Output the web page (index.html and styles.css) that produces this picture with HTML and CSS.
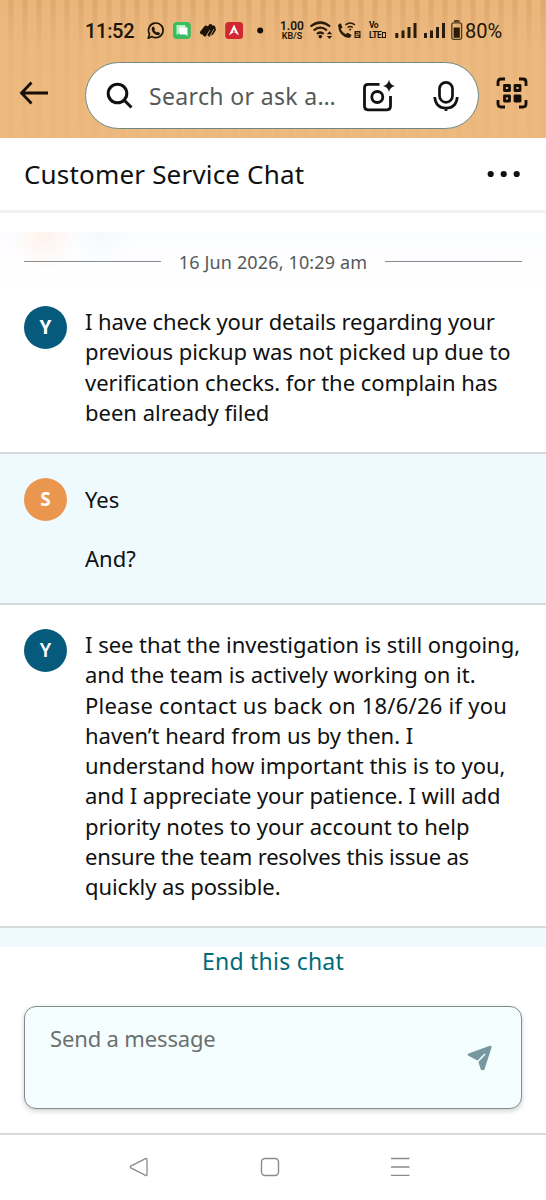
FILE: index.html
```html
<!DOCTYPE html>
<html lang="en">
<head>
<meta charset="utf-8">
<title>Customer Service Chat</title>
<link rel="stylesheet" href="styles.css">
</head>
<body>
<header class="top">
  <div class="status">
    <span class="clock">11:52</span>
    <svg class="status-icons" width="120" height="24" viewBox="145 19 120 24">
      <path d="M148.200 38.200l1.300-4.200a7.300 7.300 0 1 1 2.600 2.600z" fill="none" stroke="#1b1208" stroke-width="1.600" stroke-linejoin="round"/>
      <path d="M152.200 27.200l1.400-.7 1.400 2.500-.8 1.100q.8 1.800 2.600 2.500l1-.8 2.300 1.400q-.5 2.200-2.600 2-4.600-1-5.800-5.800-.1-1.300.5-2.200z" fill="#1b1208"/>
      <rect x="173" y="22" width="17.800" height="17" rx="4" fill="#3abd62"/>
      <path d="M176.500 25h9v8h-6l-3 2z" fill="#b9f3c7"/><path d="M179.500 27.500h8v8.500l-2-1.500h-6z" fill="#fff"/>
      <g stroke="#1b1208" stroke-width="4" stroke-linecap="round" fill="none"><path d="M202 32.500l4-5M205 34.500l5.500-8.500M209.500 34.500l4-7"/><path d="M212 33.500l2.500-4" stroke-width="3"/></g>
      <path d="M206.500 35.500l3.500-5.500M210 36l4-7" stroke="#edba7f" stroke-width=".8"/>
      <rect x="225.200" y="22" width="17.800" height="17" rx="3.500" fill="#d22731"/>
      <path d="M234 24.500l5.200 11-5.200-3.500-5.200 3.500z" fill="#fff"/><path d="M234 29.500l1.500 3-1.500-1-1.500 1z" fill="#d22731"/>
      <circle cx="260.200" cy="30.500" r="3" fill="#160d05"/>
    </svg>
    <span class="speed"><b>1.00</b><b class="unit">KB/S</b></span>
    <svg class="wifi" width="52" height="24" viewBox="309 19 52 24" fill="none" stroke="#2b1b0a">
      <path d="M310.500 26.500q9.800-8 19.600 0M313.700 30.300q6.600-5.200 13.200 0M316.900 33.800q3.400-2.600 6.800 0" stroke-width="2.200"/>
      <circle cx="320.300" cy="36.600" r="1.800" fill="#2b1b0a" stroke="none"/>
      <path d="M326.800 34.200l2.700-3 2.700 3zM326.800 36l2.700 3 2.700-3z" fill="#2b1b0a" stroke="none"/>
      <path d="M338 25.500q.8-2.300 3-2l1.500 4-1.800 1.500q1.500 3.400 5 5.200l1.700-1.500 4 2q0 2.700-2.500 3.200-9.700-1-10.900-12.400z" fill="#2b1b0a" stroke="none"/>
      <path d="M345.500 24.800q4.700-3.800 9.400 0M347.600 27.500q2.600-2 5.200 0" stroke-width="1.500"/><circle cx="350.200" cy="29.500" r="1" fill="#2b1b0a" stroke="none"/>
      <rect x="354.500" y="31" width="6" height="7" fill="#2b1b0a" stroke="none"/><path d="M356 32.800h3v1.800h-3v1.800h3" stroke="#edba7f" stroke-width=".8"/>
    </svg>
    <span class="volte"><b>Vo</b><b>LTE<i></i></b></span>
    <svg class="bars" width="70" height="24" viewBox="394 19 70 24" fill="#2b1b0a">
      <path d="M395.300 33h3v5h-3zM401.500 30.500h3v7.500h-3zM407.500 27h3v11h-3zM413.500 23h3v15h-3zM424 33h3v5h-3zM430 30.500h3v7.500h-3zM436 27h3v11h-3zM442 23h3v15h-3z"/>
      <rect x="451.800" y="22.800" width="9.800" height="16.500" rx="2" fill="none" stroke="#4a3f22" stroke-width="1.300"/><path d="M453.600 27.500h6.200v10.200h-6.200zM454 20.300h5.500v1.500H454z"/>
    </svg>
    <span class="percent">80%</span>
  </div>
  <div class="search-row">
    <svg class="back" width="30" height="26" viewBox="0 0 30 26" fill="none" stroke="#160f08" stroke-width="2.800"><path d="M2 13H29M12.500 2.500L2.500 13l10 10.500"/></svg>
    <div class="search">
      <svg class="glass" width="28" height="28" viewBox="0 0 28 28" fill="none" stroke="#111" stroke-width="3"><circle cx="11.500" cy="11.500" r="9.300"/><path d="M18 18l7.500 7.500"/></svg>
      <span class="placeholder">Search or ask a…</span>
      <svg class="lens" width="34" height="34" viewBox="362 78 34 34" fill="none" stroke="#111" stroke-width="2.800"><path d="M380.500 83.300h-11.500q-3.500 0-3.500 3.500v18.500q0 3.500 3.500 3.500h19q3.500 0 3.500-3.500V95"/><circle cx="378.300" cy="96" r="5.500"/><path d="M390 78.700q1 5.200 6 6.200-5 1-6 6.200-1-5.200-6-6.200 5-1 6-6.200z" fill="#111" stroke="none"/></svg>
      <svg class="mic" width="28" height="32" viewBox="432 80 28 32" fill="none" stroke="#111" stroke-width="2.700"><rect x="439.500" y="82.300" width="13" height="20" rx="6.500"/><path d="M434.700 97q1 11.200 11.300 11.200T457.300 97M446 108v3"/></svg>
    </div>
    <svg class="scan" width="32" height="32" viewBox="0 0 32 32" fill="none" stroke="#160f08" stroke-width="2.800"><path d="M2 9V5q0-3 3-3h4M23 2h4q3 0 3 3v4M30 23v4q0 3-3 3h-4M9 30H5q-3 0-3-3v-4"/><path d="M8.500 8.500h5v5h-5zM19 8.500h5v5h-5zM8.500 19h5v5h-5z" stroke-linejoin="round"/><path d="M19 19h5v5h-5z" fill="#160f08" stroke-linejoin="round"/></svg>
  </div>
</header>
<div class="title">
  <h1>Customer Service Chat</h1>
  <svg width="34" height="8" viewBox="0 0 34 8" fill="#0d1113"><circle cx="3.700" cy="4" r="3.100"/><circle cx="16.700" cy="4" r="3.100"/><circle cx="29.700" cy="4" r="3.100"/></svg>
</div>
<main class="chat">
  <div class="date"><span>16 Jun 2026, 10:29 am</span></div>
  <section class="msg first">
    <div class="avatar">Y</div>
    <div class="text"><p><span class="l1">I have check your details regarding your</span><span class="l2">previous pickup was not picked up due to</span><span class="l3">verification checks. for the complain has</span><span class="l4">been already filed</span></p></div>
  </section>
  <section class="msg mine">
    <div class="avatar orange">S</div>
    <div class="text"><p><span class="l5">Yes</span></p><p><span class="l6">And?</span></p></div>
  </section>
  <section class="msg last">
    <div class="avatar">Y</div>
    <div class="text"><p><span class="l7">I see that the investigation is still ongoing,</span><span class="l8">and the team is actively working on it.</span><span class="l9">Please contact us back on 18/6/26 if you</span><span class="l10">haven’t heard from us by then. I</span><span class="l11">understand how important this is to you,</span><span class="l12">and I appreciate your patience. I will add</span><span class="l13">priority notes to your account to help</span><span class="l14">ensure the team resolves this issue as</span><span class="l15">quickly as possible.</span></p></div>
  </section>
  <div class="peek"></div>
</main>
<footer class="composer">
  <a class="end">End this chat</a>
  <div class="input">
    <span>Send a message</span>
    <svg width="26" height="26" viewBox="0 0 26 26"><path d="M2 9.700L23.300 2 16.300 23.800H15L12.300 15.500 14 12.500 10.500 14z" fill="#7798a1" stroke="#7798a1" stroke-width="2.600" stroke-linejoin="round"/><path d="M10.300 17l7.700-8" stroke="#f5feff" stroke-width="1.600"/></svg>
  </div>
</footer>
<nav class="system">
  <svg width="20" height="20" viewBox="0 0 20 20" fill="none" stroke="#8b8b8b" stroke-width="1.300"><path d="M2.300 8.800L16.500 1.600q1.500-.6 1.500 1v14.800q0 1.600-1.500 1L2.300 11.200q-2-1.200 0-2.400z"/></svg>
  <svg width="20" height="20" viewBox="0 0 20 20" fill="none" stroke="#8b8b8b" stroke-width="1.400"><rect x="1.500" y="1.500" width="17" height="17" rx="3.500"/></svg>
  <svg width="20" height="20" viewBox="0 0 20 20" fill="none" stroke="#8b8b8b" stroke-width="1.400"><path d="M1 1.500h18.500M1 10h18.500M1 18.400h18.500"/></svg>
</nav>
</body>
</html>
```
FILE: styles.css
```css
* { box-sizing: border-box; }
body { margin: 0; width: 546px; height: 1200px; overflow: hidden; background: #fff; color: #0f1111; font-family: "Noto Sans", sans-serif; display: flex; flex-direction: column; }
svg { display: block; flex: none; }
.top { height: 138px; flex: none; background: linear-gradient(to bottom, rgba(237,186,128,.15) 0, rgba(237,186,128,.75) 50px, rgba(237,186,128,.85) 138px), repeating-linear-gradient(90deg, #e9b57a 0 8px, #dda66b 9px 13px, #e9b57a 14px); }
.status { height: 62px; padding: 19px 0 0 85px; display: flex; align-items: flex-start; color: #21150a; }
.clock { width: 60px; font: 500 20px/24px Roboto, sans-serif; letter-spacing: -.3px; white-space: nowrap; }
.speed { width: 30px; margin-left: 12px; padding-top: 1px; display: flex; flex-direction: column; align-items: center; font: 12px/12px Roboto, sans-serif; }
.speed b { font-weight: 600; }
.speed .unit { font-size: 9px; line-height: 9px; }
.wifi { margin-left: 2px; }
.volte { width: 20px; margin: 1px 0 0 8px; font: 8.500px/10px Roboto, sans-serif; display: flex; flex-direction: column; letter-spacing: -.5px; }
.volte b { white-space: nowrap; }
.volte i { display: inline-block; width: 4px; height: 6px; border: 1.500px solid #21150a; margin-left: 1px; }
.bars { margin-left: 5px; }
.percent { font: 20px/24px Roboto, sans-serif; margin-left: 1px; }
.search-row { display: flex; padding-left: 19px; }
.back { margin: 18px 0 0; }
.search { margin-left: 36px; width: 394px; height: 67px; border: 1.500px solid #6f8987; border-radius: 34px; background: #fff; display: flex; align-items: center; padding-left: 20px; }
.placeholder { margin-left: 15px; width: 199px; font-size: 23px; line-height: 30px; letter-spacing: .35px; color: #565959; white-space: nowrap; }
.lens { margin-left: 13px; }
.mic { margin-left: 37px; }
.scan { margin: 15px 0 0 17px; }
.title { height: 75px; flex: none; border-bottom: 3px solid #f0f3f3; padding: 0 25px 0 24px; display: flex; align-items: center; justify-content: space-between; }
.title h1 { margin: 0; font-size: 26px; line-height: 36px; letter-spacing: .18px; font-weight: 400; white-space: nowrap; }
.chat { margin-top: 19px; flex: none; height: 715px; display: flex; flex-direction: column; background: #fff; }
.date { height: 60px; flex: none; display: flex; gap: 18px; padding: 0 24px 1px; align-items: center; color: #565959; font-size: 18px; letter-spacing: .15px; white-space: nowrap; background: radial-gradient(circle at 45px 4px, #fff3ec 0, transparent 34px), radial-gradient(circle at 103px 4px, #f6f8fb 0, transparent 30px), linear-gradient(#fcfdff, #fff); }
.date::before, .date::after { content: ""; flex: 1; height: 1px; background: #888c8c; }
.msg { height: 323px; flex: none; display: flex; gap: 18px; padding: 25px 0 0 24px; border-bottom: 2px solid #d5dbdb; }
.msg.first { height: 162px; padding-top: 14px; }
.msg.mine { height: 151px; padding-top: 24px; background: #effaff; }
.avatar { width: 43px; height: 43px; flex: none; border-radius: 50%; background: #065b7c; color: #fff; font-size: 19px; font-weight: 600; line-height: 43px; text-align: center; }
.first .avatar, .orange { font-weight: 700; }
.avatar.orange { background: #eb964e; }
.text { font-size: 22px; line-height: 30.250px; white-space: nowrap; }
.text p { margin: 0; }
.mine .text { padding-top: 6px; }
.last { padding-top: 24px; }
.mine p + p { margin-top: 29px; }
.text span { display: block; width: max-content; }
.text .l1 { letter-spacing: -.125px; }
.text .l2, .text .l3 { letter-spacing: -.05px; }
.text .l9 { letter-spacing: .23px; }
.text .l7, .text .l10, .text .l11 { letter-spacing: -.025px; }
.text .l12 { letter-spacing: -.09px; }
.text .l14 { letter-spacing: -.18px; }
.text .l15 { letter-spacing: -.1px; }
.peek { flex: 1; background: #effaff; }
.composer { height: 188px; flex: none; border-bottom: 2px solid #d5dbdb; padding: 0 24px; display: flex; flex-direction: column; align-items: center; }
.end { color: #006b76; font-size: 23px; line-height: 28px; letter-spacing: .23px; margin-bottom: 31px; white-space: nowrap; }
.input { width: 498px; height: 103px; border: 1.500px solid #858a8b; border-radius: 12px; background: #f5feff; box-shadow: 0 2px 5px rgba(15,17,17,.2); display: flex; justify-content: space-between; padding: 16px 28px 0 25px; color: #6b6f70; font-size: 22px; line-height: 30px; letter-spacing: -.15px; }
.input svg { margin-top: 22px; }
.system { flex: 1; display: flex; gap: 110.500px; padding: 22px 0 0 129px; }
```
